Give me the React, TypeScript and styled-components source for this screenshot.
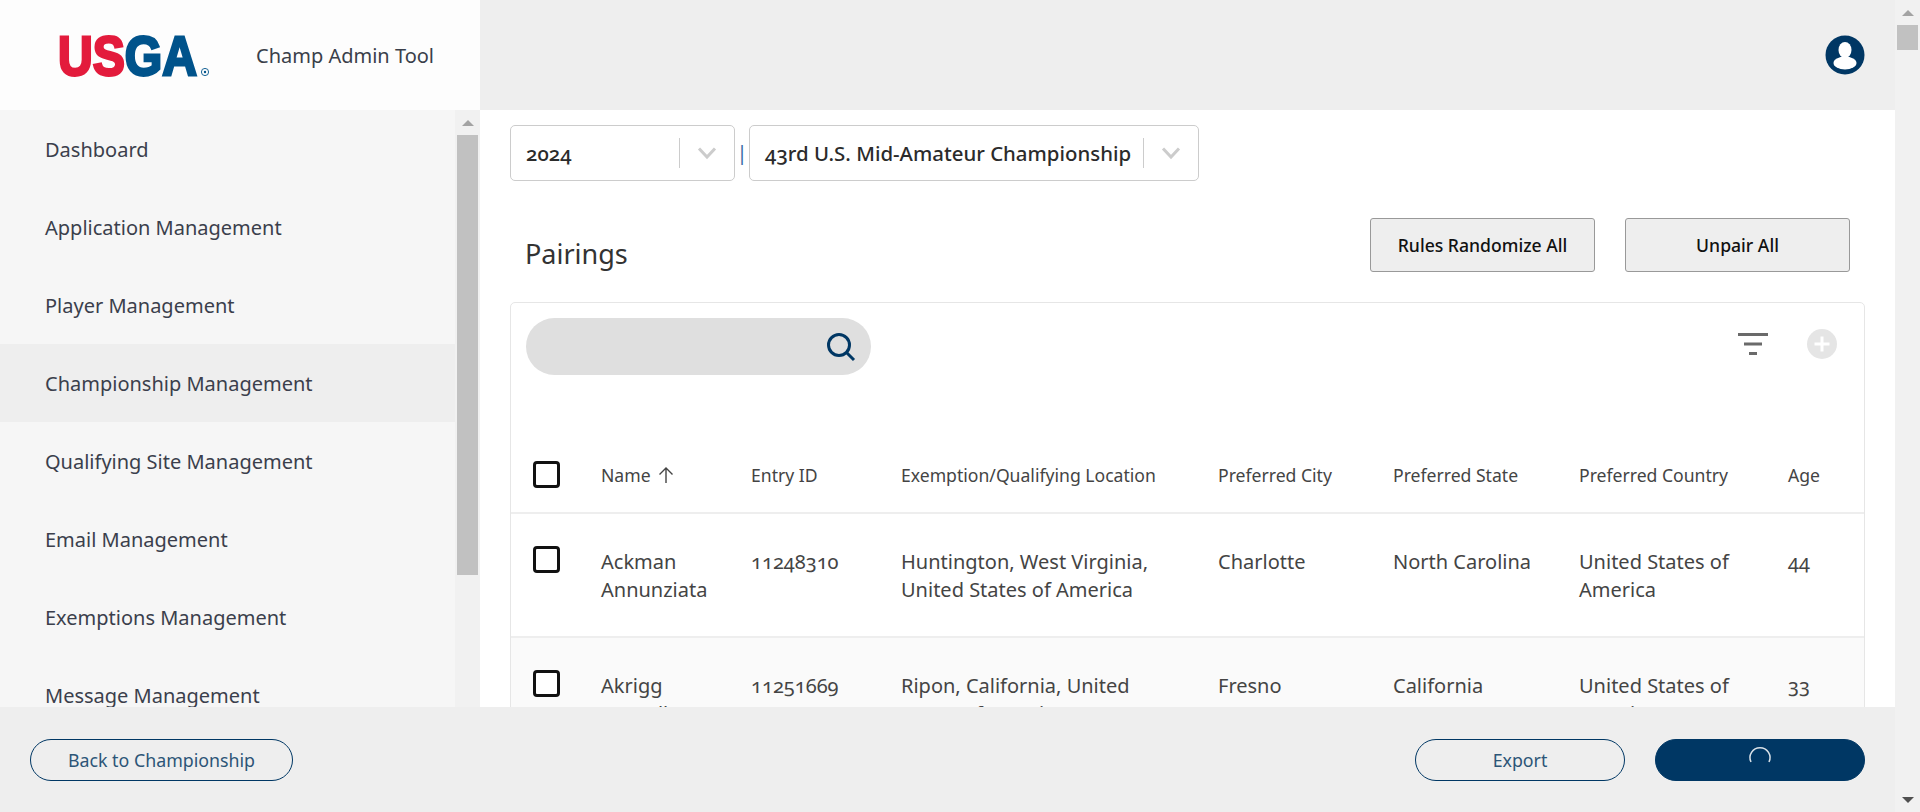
import React from 'react'
import styled, { createGlobalStyle } from 'styled-components'

const navy = '#003764'
const fontStack = '"Noto Sans", "Open Sans", sans-serif'

const GlobalStyle = createGlobalStyle`
  html, body {
    margin: 0;
    padding: 0;
    height: 100%;
    overflow: hidden;
    background: #fff;
    font-family: ${fontStack};
    font-variant-numeric: oldstyle-nums;
    color: #333;
  }

  * {
    box-sizing: border-box;
  }
`

const Page = styled.div`
  display: flex;
  width: 100vw;
  height: 100vh;
`

const Shell = styled.div`
  flex: 1;
  min-width: 0;
  display: flex;
  flex-direction: column;
`

const TopBar = styled.header`
  flex: 0 0 110px;
  display: flex;
  align-items: center;
  justify-content: space-between;
  background: #eee;
  padding-right: 30px;
`

const Brand = styled.div`
  width: 480px;
  height: 100%;
  display: flex;
  align-items: center;
  padding-left: 59px;
  background: #fdfdfd;
`

const BrandTitle = styled.span`
  margin-left: 27px;
  font-size: 20px;
  color: #3a3f4a;
`

const Middle = styled.div`
  flex: 1;
  min-height: 0;
  display: flex;
`

const Sidebar = styled.aside`
  flex: 0 0 480px;
  display: flex;
  overflow: hidden;
`

const NavList = styled.nav`
  flex: 1;
  background: #f6f6f6;
`

const NavItem = styled.div<{ $active?: boolean }>`
  height: 78px;
  display: flex;
  align-items: center;
  padding-left: 45px;
  font-size: 20px;
  color: #3b3f4c;
  background: ${props => (props.$active ? '#eee' : 'transparent')};
`

const ScrollTrack = styled.div<{ $spread?: boolean }>`
  flex: 0 0 25px;
  display: flex;
  flex-direction: column;
  align-items: center;
  justify-content: ${props => (props.$spread ? 'space-between' : 'flex-start')};
  background: #f1f1f1;
`

const ScrollGroup = styled.div`
  display: flex;
  flex-direction: column;
  align-items: center;
`

const ScrollButton = styled.div`
  width: 25px;
  height: 25px;
  display: flex;
  align-items: center;
  justify-content: center;
`

const ArrowUp = styled.span`
  width: 0;
  height: 0;
  border-left: 6px solid transparent;
  border-right: 6px solid transparent;
  border-bottom: 6px solid #a3a3a3;
`

const ArrowDown = styled.span`
  width: 0;
  height: 0;
  border-left: 6px solid transparent;
  border-right: 6px solid transparent;
  border-top: 6px solid #505050;
`

const ScrollThumb = styled.div<{ $height: number }>`
  width: 21px;
  height: ${props => props.$height}px;
  background: #c1c1c1;
`

const Main = styled.main`
  flex: 1;
  min-width: 0;
  overflow: hidden;
  background: #fff;
  padding: 15px 30px 0;
`

const SelectRow = styled.div`
  display: flex;
  align-items: center;
`

const SelectBox = styled.div<{ $width: number }>`
  width: ${props => props.$width}px;
  height: 56px;
  display: flex;
  align-items: center;
  border: 1px solid #ccc;
  border-radius: 5px;
  padding-left: 15px;
  background: #fff;
`

const SelectValue = styled.span`
  flex: 1;
  font-size: 20.4px;
  font-weight: 500;
  color: #2b2b2b;
  white-space: nowrap;
`

const SelectIndicator = styled.div`
  flex: 0 0 55px;
  height: 30px;
  display: flex;
  align-items: center;
  justify-content: center;
  border-left: 1px solid #ccc;
  color: #ccc;
`

const SelectDivider = styled.span`
  width: 14px;
  text-align: center;
  font-size: 20px;
  line-height: 1;
  color: #3a6ea5;
`

const TitleRow = styled.div`
  display: flex;
  align-items: center;
  height: 54px;
  margin-top: 37px;
  padding: 0 15px;
  gap: 30px;
`

const PageTitle = styled.h1`
  flex: 1;
  margin: 0;
  padding-top: 16px;
  font-size: 27px;
  font-weight: 400;
  color: #333;
`

const GhostButton = styled.button`
  width: 225px;
  height: 54px;
  background: #eee;
  border: 1px solid #999;
  border-radius: 3px;
  font-family: ${fontStack};
  font-size: 17.6px;
  font-weight: 500;
  color: #111;
`

const Card = styled.section`
  margin-top: 30px;
  border: 1px solid #e6e6e6;
  border-radius: 5px;
  height: 560px;
`

const Toolbar = styled.div`
  display: flex;
  align-items: center;
  justify-content: space-between;
  padding: 15px 27px 0 15px;
`

const SearchField = styled.div`
  width: 345px;
  height: 57px;
  display: flex;
  align-items: center;
  justify-content: flex-end;
  padding-right: 14px;
  border-radius: 29px;
  background: #dfdfdf;
  color: ${navy};
`

const ToolIcons = styled.div`
  display: flex;
  align-items: center;
  gap: 39px;
  margin-bottom: 5px;
`

const Table = styled.table`
  width: 100%;
  margin-top: 62px;
  border-collapse: collapse;
  table-layout: fixed;
`

const HeadCell = styled.th<{ $width?: number }>`
  width: ${props => (props.$width ? `${props.$width}px` : 'auto')};
  height: 76px;
  padding: 0;
  text-align: left;
  vertical-align: middle;
  font-size: 17.6px;
  font-weight: 400;
  color: #444;
  border-bottom: 2px solid #eee;
`

const BodyRow = styled.tr<{ $striped?: boolean }>`
  height: 124px;
  background: ${props => (props.$striped ? '#fafafa' : '#fff')};
  border-bottom: 2px solid #eee;
`

const BodyCell = styled.td`
  padding: 34px 30px 0 0;
  vertical-align: top;
  font-size: 20px;
  line-height: 28px;
  color: #444;
`

const CheckCell = styled.td`
  padding: 32px 0 0 22px;
  vertical-align: top;
`

const HeadCheckWrap = styled.div`
  display: flex;
  padding-left: 22px;
`

const Check = styled.input.attrs({ type: 'checkbox' })`
  appearance: none;
  display: block;
  width: 27px;
  height: 27px;
  margin: 0;
  background: #fff;
  border: 3px solid #111;
  border-radius: 4px;
`

const SortArrow = styled.svg`
  margin-left: 7px;
  vertical-align: -2px;
`

const Footer = styled.footer`
  flex: 0 0 105px;
  display: flex;
  align-items: flex-start;
  padding: 32px 30px 0;
  background: #eee;
  gap: 30px;
`

const PillButton = styled.button<{ $width: number; $solid?: boolean }>`
  width: ${props => props.$width}px;
  height: 42px;
  display: flex;
  align-items: center;
  justify-content: center;
  border: 1.5px solid ${navy};
  border-radius: 21px;
  background: ${props => (props.$solid ? navy : 'transparent')};
  color: #2c5577;
  font-family: ${fontStack};
  font-size: 17.8px;
`

const FooterSpacer = styled.div`
  flex: 1;
`

const UsgaLogo = () => (
  <svg width="170" height="50" viewBox="0 0 170 50" aria-label="USGA">
    <text
      x="-1"
      y="45"
      fontFamily="Liberation Sans, sans-serif"
      fontWeight="700"
      fontSize="56"
      strokeWidth="2.8"
      textLength="139"
      lengthAdjust="spacingAndGlyphs"
    >
      <tspan fill="#e31b3c" stroke="#e31b3c">US</tspan>
      <tspan fill="#00538b" stroke="#00538b">GA</tspan>
    </text>
    <circle cx="146" cy="42" r="3.6" fill="none" stroke="#00538b" strokeWidth="0.9" />
    <circle cx="146" cy="42" r="1.2" fill="#00538b" />
  </svg>
)

const UserAvatar = () => (
  <svg width="40" height="40" viewBox="0 0 40 40">
    <circle cx="20" cy="20" r="19.5" fill={navy} />
    <ellipse cx="20" cy="15" rx="6.5" ry="8" fill="#fff" />
    <ellipse cx="20" cy="28" rx="11.5" ry="6.5" fill="#fff" />
  </svg>
)

const Chevron = () => (
  <svg width="20" height="14" viewBox="0 0 20 14" fill="none">
    <path d="M2 2.5 L10 11 L18 2.5" stroke="currentColor" strokeWidth="3" />
  </svg>
)

const SearchIcon = () => (
  <svg width="32" height="32" viewBox="0 0 32 32" fill="none">
    <circle cx="14" cy="14" r="10.5" stroke="currentColor" strokeWidth="3" />
    <path d="M21.5 21.5 L29 29" stroke="currentColor" strokeWidth="3" />
  </svg>
)

const FilterIcon = () => (
  <svg width="30" height="24" viewBox="0 0 30 24" fill="#6a6a6a">
    <rect x="0" y="1" width="30" height="3" />
    <rect x="6" y="10.5" width="18" height="3" />
    <rect x="11" y="20" width="8" height="3" />
  </svg>
)

const PlusIcon = () => (
  <svg width="30" height="30" viewBox="0 0 30 30">
    <circle cx="15" cy="15" r="15" fill="#e5e5e5" />
    <rect x="13.5" y="7.5" width="3" height="15" fill="#fff" />
    <rect x="7.5" y="13.5" width="15" height="3" fill="#fff" />
  </svg>
)

const Spinner = () => (
  <svg width="26" height="26" viewBox="0 0 26 26" fill="none" style={{ marginTop: -4 }}>
    <path d="M4 17 A10 10 0 1 1 22 17" stroke="#d8e1e8" strokeWidth="1.5" />
  </svg>
)

const navItems = [
  'Dashboard',
  'Application Management',
  'Player Management',
  'Championship Management',
  'Qualifying Site Management',
  'Email Management',
  'Exemptions Management',
  'Message Management'
]

const rows = [
  {
    name: ['Ackman', 'Annunziata'],
    id: '11248310',
    location: 'Huntington, West Virginia, United States of America',
    city: 'Charlotte',
    state: 'North Carolina',
    country: 'United States of America',
    age: '44'
  },
  {
    name: ['Akrigg', 'Stowell'],
    id: '11251669',
    location: 'Ripon, California, United States of America',
    city: 'Fresno',
    state: 'California',
    country: 'United States of America',
    age: '33'
  }
]

export default function App() {
  return (
    <Page>
      <GlobalStyle />
      <Shell>
        <TopBar>
          <Brand>
            <UsgaLogo />
            <BrandTitle>Champ Admin Tool</BrandTitle>
          </Brand>
          <UserAvatar />
        </TopBar>
        <Middle>
          <Sidebar>
            <NavList>
              {navItems.map(item => (
                <NavItem key={item} $active={item === 'Championship Management'}>
                  {item}
                </NavItem>
              ))}
            </NavList>
            <ScrollTrack>
              <ScrollButton>
                <ArrowUp />
              </ScrollButton>
              <ScrollThumb $height={440} />
            </ScrollTrack>
          </Sidebar>
          <Main>
            <SelectRow>
              <SelectBox $width={225}>
                <SelectValue>2024</SelectValue>
                <SelectIndicator>
                  <Chevron />
                </SelectIndicator>
              </SelectBox>
              <SelectDivider>|</SelectDivider>
              <SelectBox $width={450}>
                <SelectValue>43rd U.S. Mid-Amateur Championship</SelectValue>
                <SelectIndicator>
                  <Chevron />
                </SelectIndicator>
              </SelectBox>
            </SelectRow>
            <TitleRow>
              <PageTitle>Pairings</PageTitle>
              <GhostButton>Rules Randomize All</GhostButton>
              <GhostButton>Unpair All</GhostButton>
            </TitleRow>
            <Card>
              <Toolbar>
                <SearchField>
                  <SearchIcon />
                </SearchField>
                <ToolIcons>
                  <FilterIcon />
                  <PlusIcon />
                </ToolIcons>
              </Toolbar>
              <Table>
                <thead>
                  <tr>
                    <HeadCell $width={90}>
                      <HeadCheckWrap>
                        <Check />
                      </HeadCheckWrap>
                    </HeadCell>
                    <HeadCell $width={150}>
                      Name
                      <SortArrow width="16" height="18" viewBox="0 0 16 18" fill="none">
                        <path d="M8 17 V2 M1.5 8.5 L8 2 L14.5 8.5" stroke="#444" strokeWidth="1.4" />
                      </SortArrow>
                    </HeadCell>
                    <HeadCell $width={150}>Entry ID</HeadCell>
                    <HeadCell $width={317}>Exemption/Qualifying Location</HeadCell>
                    <HeadCell $width={175}>Preferred City</HeadCell>
                    <HeadCell $width={186}>Preferred State</HeadCell>
                    <HeadCell $width={209}>Preferred Country</HeadCell>
                    <HeadCell>Age</HeadCell>
                  </tr>
                </thead>
                <tbody>
                  {rows.map((row, index) => (
                    <BodyRow key={row.id} $striped={index % 2 === 1}>
                      <CheckCell>
                        <Check />
                      </CheckCell>
                      <BodyCell>
                        {row.name[0]}
                        <br />
                        {row.name[1]}
                      </BodyCell>
                      <BodyCell>{row.id}</BodyCell>
                      <BodyCell>{row.location}</BodyCell>
                      <BodyCell>{row.city}</BodyCell>
                      <BodyCell>{row.state}</BodyCell>
                      <BodyCell>{row.country}</BodyCell>
                      <BodyCell>{row.age}</BodyCell>
                    </BodyRow>
                  ))}
                </tbody>
              </Table>
            </Card>
          </Main>
        </Middle>
        <Footer>
          <PillButton $width={263}>Back to Championship</PillButton>
          <FooterSpacer />
          <PillButton $width={210}>Export</PillButton>
          <PillButton $width={210} $solid>
            <Spinner />
          </PillButton>
        </Footer>
      </Shell>
      <ScrollTrack $spread>
        <ScrollGroup>
          <ScrollButton>
            <ArrowUp />
          </ScrollButton>
          <ScrollThumb $height={25} />
        </ScrollGroup>
        <ScrollButton>
          <ArrowDown />
        </ScrollButton>
      </ScrollTrack>
    </Page>
  )
}
